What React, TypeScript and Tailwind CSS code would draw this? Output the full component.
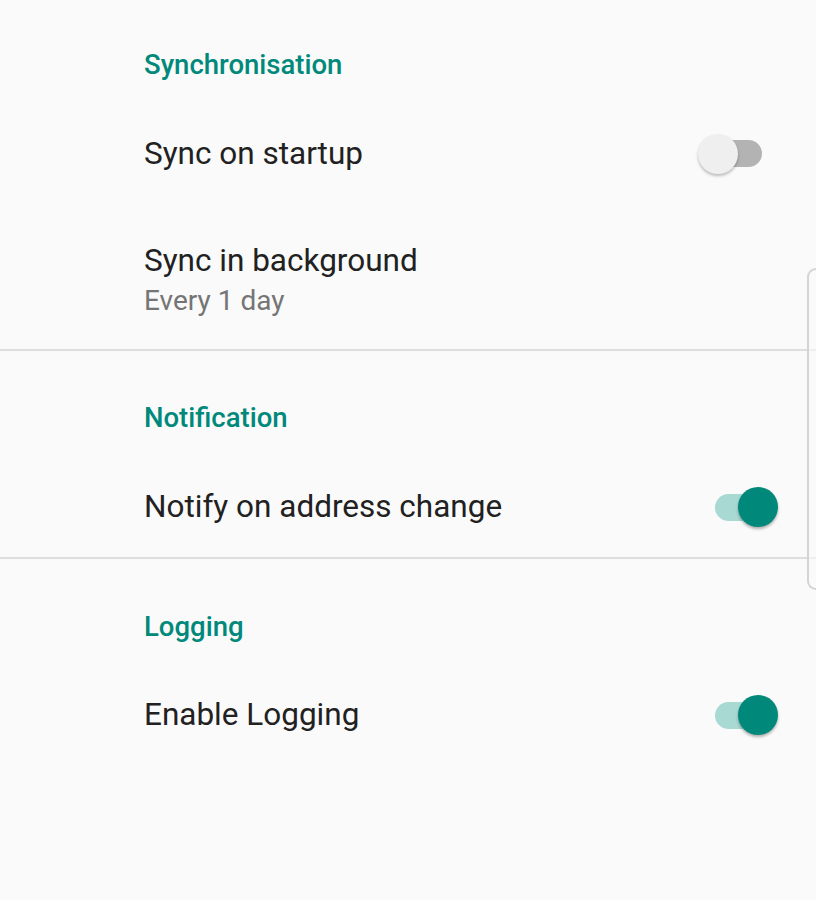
import React from "react";

function Switch({ checked }: { checked: boolean }) {
  if (checked) {
    return (
      <div className="relative mr-[38px] h-[40px] w-[63px] shrink-0">
        <div className="absolute left-0 top-[7px] h-[27px] w-[52px] rounded-full bg-[#a9d9d3]" />
        <div className="absolute left-[23px] top-0 h-[40px] w-[40px] rounded-full bg-[#00897b] shadow-[0_2px_3px_rgba(0,0,0,0.3)]" />
      </div>
    );
  }
  return (
    <div className="relative mr-[54px] h-[40px] w-[64px] shrink-0">
      <div className="absolute left-[10px] top-[6px] h-[27px] w-[54px] rounded-full bg-[#b3b3b3]" />
      <div className="absolute left-0 top-0 h-[40px] w-[40px] rounded-full bg-[#efefef] shadow-[0_2px_3px_rgba(0,0,0,0.25)]" />
    </div>
  );
}

function Header({ children }: { children: React.ReactNode }) {
  return (
    <div className="pl-[144px] text-[27.5px] font-medium leading-[36px] text-[#00897b]">
      {children}
    </div>
  );
}

function Row({
  title,
  summary,
  toggle,
  className = "",
}: {
  title: string;
  summary?: string;
  toggle?: boolean;
  className?: string;
}) {
  return (
    <div className={`flex items-center justify-between pl-[144px] ${className}`}>
      <div>
        <div className="text-[31.5px] leading-[40px] text-[#212121]">{title}</div>
        {summary && (
          <div className="mt-[2px] text-[28px] leading-[36px] text-[#757575]">{summary}</div>
        )}
      </div>
      {toggle !== undefined && <Switch checked={toggle} />}
    </div>
  );
}

export default function App() {
  return (
    <div
      className="relative h-[900px] w-[816px] overflow-hidden bg-[#fafafa]"
      style={{ fontFamily: "Roboto, 'Noto Sans', sans-serif" }}
    >
      <section className="pt-[47px]">
        <Header>Synchronisation</Header>
        <Row className="mt-[51px]" title="Sync on startup" toggle={false} />
        <Row className="mt-[67px]" title="Sync in background" summary="Every 1 day" />
      </section>
      <div className="mt-[30px] h-[2px] bg-[#dedede]" />

      <section className="pt-[49px]">
        <Header>Notification</Header>
        <Row className="mt-[51px]" title="Notify on address change" toggle={true} />
      </section>
      <div className="mt-[30px] h-[2px] bg-[#dedede]" />

      <section className="pt-[50px]">
        <Header>Logging</Header>
        <Row className="mt-[50px]" title="Enable Logging" toggle={true} />
      </section>

      {/* edge panel handle */}
      <div className="absolute right-0 top-[268px] h-[322px] w-[9px] rounded-l-[10px] border-y-2 border-l-2 border-[#d4d4d4] bg-[#fafafa]/60" />
    </div>
  );
}
